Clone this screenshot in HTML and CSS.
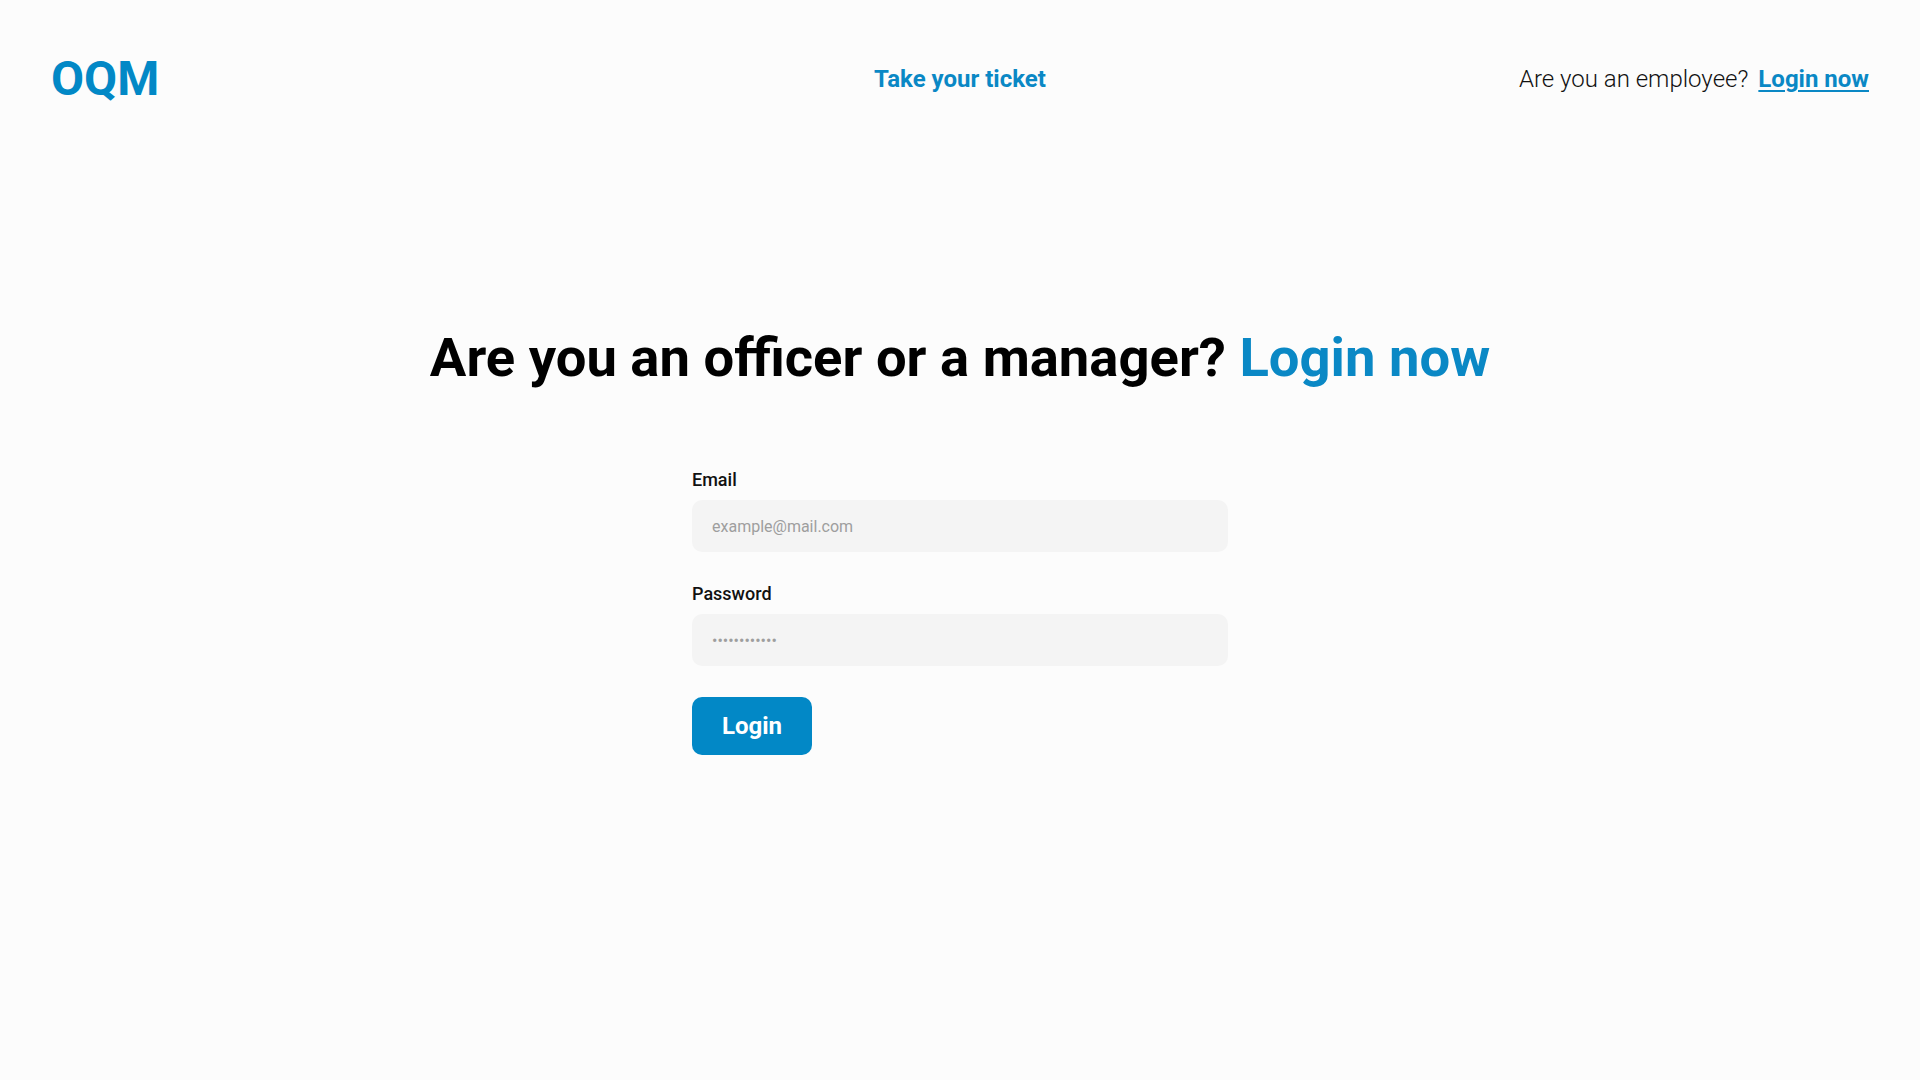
FILE: index.html
```html
<!DOCTYPE html>
<html lang="en">
<head>
<meta charset="utf-8">
<title>OQM - Login</title>
<link rel="stylesheet" href="styles.css">
</head>
<body>
<header class="topbar">
  <a class="logo" href="#">OQM</a>
  <a class="nav-link" href="#">Take your ticket</a>
  <div class="employee">
    <span class="employee-text">Are you an employee?</span>
    <a class="employee-link" href="#">Login now</a>
  </div>
</header>
<main class="main">
  <h1 class="title">Are you an officer or a manager? <span class="accent">Login now</span></h1>
  <form class="form" onsubmit="return false">
    <label class="label" for="email">Email</label>
    <input class="input" id="email" type="email" placeholder="example@mail.com">
    <label class="label label-gap" for="password">Password</label>
    <input class="input" id="password" type="text" placeholder="••••••••••••">
    <button class="button" type="submit">Login</button>
  </form>
</main>
</body>
</html>
```
FILE: styles.css
```css
* { box-sizing: border-box; }
html, body {
  margin: 0;
  padding: 0;
  background: #fcfcfc;
  font-family: Roboto, "Liberation Sans", sans-serif;
  color: #000;
}
a { text-decoration: none; }

.topbar {
  height: 157px;
  padding: 1px 51px 0;
  display: grid;
  grid-template-columns: 1fr auto 1fr;
  align-items: center;
}
.logo {
  justify-self: start;
  font-size: 48px;
  font-weight: 700;
  color: #0288c6;
  line-height: 1;
}
.nav-link {
  font-size: 24px;
  font-weight: 700;
  color: #0a88c5;
}
.employee {
  justify-self: end;
  display: flex;
  align-items: baseline;
  gap: 10px;
  font-size: 24px;
}
.employee-text {
  font-weight: 300;
  color: #111;
}
.employee-link {
  font-weight: 700;
  color: #0a88c5;
  text-decoration: underline;
  text-underline-offset: 3px;
  text-decoration-thickness: 2px;
}

.main {
  display: flex;
  flex-direction: column;
  align-items: center;
  padding-top: 170px;
}
.title {
  margin: 0;
  font-size: 54.4px;
  font-weight: 700;
  line-height: 62px;
}
.accent { color: #0a88c5; }

.form {
  width: 536px;
  margin-top: 80px;
  display: flex;
  flex-direction: column;
  align-items: flex-start;
}
.label {
  font-size: 18px;
  font-weight: 500;
  line-height: 21px;
  margin-bottom: 10px;
  color: #111;
}
.label-gap { margin-top: 31px; }
.input {
  width: 100%;
  height: 52px;
  border: none;
  border-radius: 10px;
  background: #f4f4f4;
  padding: 0 20px;
  font-family: Roboto, "Liberation Sans", sans-serif;
  font-size: 16px;
  color: #333;
  outline: none;
}
.input::placeholder { color: #9e9e9e; }
.button {
  margin-top: 31px;
  width: 120px;
  height: 58px;
  border: none;
  border-radius: 10px;
  background: #0288c6;
  color: #fff;
  font-family: Roboto, "Liberation Sans", sans-serif;
  font-size: 24px;
  font-weight: 700;
  cursor: pointer;
}
```
